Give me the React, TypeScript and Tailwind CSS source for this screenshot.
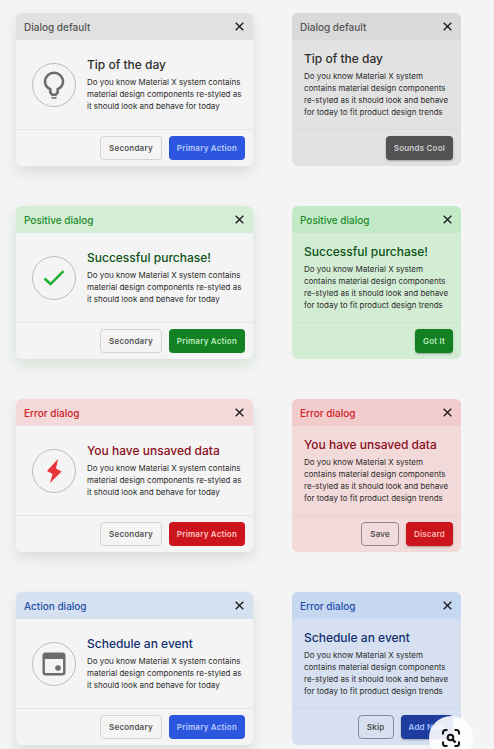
import React from "react";

type Tone = "neutral" | "positive" | "error" | "action";

interface Theme {
  head: string;
  title: string;
  compactCard: string;
  compactHead: string;
  line: string;
  primary: string;
  compactPrimary: string;
  outline: string;
  shadow: string;
}

const themes: Record<Tone, Theme> = {
  neutral: {
    head: "bg-[#e1e1e1] text-[#555555]",
    title: "text-[#2e2e2e]",
    compactCard: "bg-[#e2e2e2]",
    compactHead: "bg-[#d9d9d9] text-[#555555]",
    line: "border-[#d9d9d9]",
    primary: "bg-[#2c56dd] text-[#b9ccff]",
    compactPrimary: "bg-[#525252] text-[#cfcfcf]",
    outline: "border-[#8c8c8c]",
    shadow: "shadow-[0_6px_14px_rgba(0,0,0,0.10)]",
  },
  positive: {
    head: "bg-[#d3eed5] text-[#1f8a2c]",
    title: "text-[#0d5216]",
    compactCard: "bg-[#d3edd5]",
    compactHead: "bg-[#c3eac7] text-[#1f8a2c]",
    line: "border-[#c6e6c9]",
    primary: "bg-[#128023] text-[#b8ecbd]",
    compactPrimary: "bg-[#128023] text-[#b8ecbd]",
    outline: "border-[#8c8c8c]",
    shadow: "shadow-[0_6px_14px_rgba(20,110,40,0.14)]",
  },
  error: {
    head: "bg-[#f3d9d9] text-[#cf2027]",
    title: "text-[#8a0f1a]",
    compactCard: "bg-[#f3dada]",
    compactHead: "bg-[#f2cccd] text-[#cf2027]",
    line: "border-[#f0cdce]",
    primary: "bg-[#cb141b] text-[#ffc4c4]",
    compactPrimary: "bg-[#cb141b] text-[#ffb9b9]",
    outline: "border-[#958888]",
    shadow: "shadow-[0_6px_14px_rgba(0,0,0,0.10)]",
  },
  action: {
    head: "bg-[#d5e0f0] text-[#2450ab]",
    title: "text-[#12306f]",
    compactCard: "bg-[#d6e0f0]",
    compactHead: "bg-[#c6d7f0] text-[#2450ab]",
    line: "border-[#c9d7ec]",
    primary: "bg-[#2c56dd] text-[#b9ccff]",
    compactPrimary: "bg-[#1f3d9f] text-[#a9c2ff]",
    outline: "border-[#858b96]",
    shadow: "shadow-[0_6px_14px_rgba(0,0,0,0.10)]",
  },
};

function Header({ label, className }: { label: string; className: string }) {
  return (
    <header className={`flex h-[27px] items-center justify-between pl-2 pr-[9px] ${className}`}>
      <h2 className="text-[10px] font-medium leading-4">{label}</h2>
      <button type="button" aria-label="Close" className="text-[#161616]">
        <svg className="block size-[9px]" viewBox="0 0 9 9" fill="none" stroke="currentColor" strokeWidth="1.3">
          <path d="M.7.7l7.600 7.600M8.300.7L.7 8.300" />
        </svg>
      </button>
    </header>
  );
}

function Action({ label, className }: { label: string; className: string }) {
  return (
    <button
      type="button"
      className={`h-6 whitespace-nowrap rounded px-2 text-[8px] font-semibold leading-3 tracking-wide ${className}`}
    >
      {label}
    </button>
  );
}

function Copy({ title, lines, tone }: { title: string; lines: string[]; tone: Tone }) {
  return (
    <div className="whitespace-nowrap">
      <h3 className={`text-[12px] font-medium leading-4 ${themes[tone].title}`}>{title}</h3>
      <p className="mt-[3px] text-[8px] leading-3 text-[#2b2b2b]">
        {lines.map((line) => (
          <span key={line} className="block">
            {line}
          </span>
        ))}
      </p>
    </div>
  );
}

const wideLines = [
  "Do you know Material X system contains",
  "material design components re-styled as",
  "it should look and behave for today",
];
const compactLines = [
  "Do you know Material X system",
  "contains material design components",
  "re-styled as it should look and behave",
  "for today to fit product design trends",
];

function WideDialog({ label, title, tone, icon }: { label: string; title: string; tone: Tone; icon: React.ReactNode }) {
  const t = themes[tone];
  return (
    <section className={`overflow-hidden rounded-md bg-[#f4f4f4] ${t.shadow}`}>
      <Header label={label} className={t.head} />
      <div className="flex h-[89px] items-center gap-[11px] px-4">
        <div className="flex size-11 shrink-0 items-center justify-center rounded-full border border-[#bbbbbb]">
          {icon}
        </div>
        <Copy title={title} lines={wideLines} tone={tone} />
      </div>
      <footer className="flex justify-end gap-[7px] border-t border-[#e4e4e4] px-2 py-[6px]">
        <Action label="Secondary" className="border border-[#d2d2d2] text-[#555555]" />
        <Action label="Primary Action" className={t.primary} />
      </footer>
    </section>
  );
}

function CompactDialog({
  label,
  title,
  tone,
  secondary,
  primary,
}: {
  label: string;
  title: string;
  tone: Tone;
  secondary?: string;
  primary: string;
}) {
  const t = themes[tone];
  return (
    <section className={`overflow-hidden rounded-md ${t.compactCard}`}>
      <Header label={label} className={t.compactHead} />
      <div className="flex h-[89px] items-center px-3">
        <Copy title={title} lines={compactLines} tone={tone} />
      </div>
      <footer className={`flex justify-end gap-[7px] border-t px-2 py-[6px] ${t.line}`}>
        {secondary && <Action label={secondary} className={`border text-[#505050] ${t.outline}`} />}
        <Action label={primary} className={`shadow-[0_1px_2px_rgba(0,0,0,0.3)] ${t.compactPrimary}`} />
      </footer>
    </section>
  );
}

const Bulb = () => (
  <svg className="h-7 w-[22px]" viewBox="0 0 22 28" fill="none" stroke="#6c6c6c" strokeWidth="2.600">
    <path d="M7.300 18.200C4 16.600 2 14 2 10.800a9 9 0 0 1 18 0c0 3.200-2 5.800-5.300 7.400v3.300l-2 2.200H9.300l-2-2.200z" />
    <path d="M8.500 26.300q2.500 1.600 5 0" strokeWidth="1.500" />
  </svg>
);
const Check = () => (
  <svg className="h-4 w-[22px]" viewBox="0 0 22 16" fill="none" stroke="#1daf2e" strokeWidth="2.400">
    <path d="M1.500 8.500l6 5.500L20.500 1.200" />
  </svg>
);
const Bolt = () => (
  <svg className="h-6 w-4" viewBox="0 0 16 24" fill="#ea333a">
    <path d="M12 0L1 12l5.500 3L4 24l11.500-11.500-5.500-3z" />
  </svg>
);
const Calendar = () => (
  <svg className="size-6" viewBox="0 0 24 24" fill="none" stroke="#6c6c6c" strokeWidth="2.400">
    <rect x="1.700" y="1.700" width="20.600" height="20.600" rx="2" />
    <path d="M1.500 4.500h21" strokeWidth="5" />
    <circle cx="16" cy="16" r="2.800" fill="#6c6c6c" stroke="none" />
  </svg>
);

export default function App() {
  return (
    <main className="relative min-h-screen bg-[#f4f4f4] pb-1 pl-4 pr-[33px] pt-[13px] font-['Inter','Liberation_Sans',sans-serif]">
      <div className="grid grid-cols-[237fr_169fr] gap-x-[39px] gap-y-10">
        <WideDialog label="Dialog default" title="Tip of the day" tone="neutral" icon={<Bulb />} />
        <CompactDialog label="Dialog default" title="Tip of the day" tone="neutral" primary="Sounds Cool" />
        <WideDialog label="Positive dialog" title="Successful purchase!" tone="positive" icon={<Check />} />
        <CompactDialog label="Positive dialog" title="Successful purchase!" tone="positive" primary="Got It" />
        <WideDialog label="Error dialog" title="You have unsaved data" tone="error" icon={<Bolt />} />
        <CompactDialog label="Error dialog" title="You have unsaved data" tone="error" secondary="Save" primary="Discard" />
        <WideDialog label="Action dialog" title="Schedule an event" tone="action" icon={<Calendar />} />
        <CompactDialog label="Error dialog" title="Schedule an event" tone="action" secondary="Skip" primary="Add New" />
      </div>
      <button
        type="button"
        aria-label="Visual search"
        className="fixed -bottom-[11px] right-[21px] flex size-11 items-center justify-center rounded-full bg-white/90 text-[#111111]"
      >
        <svg className="size-5" viewBox="0 0 20 20" fill="none" stroke="currentColor" strokeWidth="2">
          <path d="M2 6.500V4.500A2.500 2.500 0 0 1 4.500 2h2M13.500 2h2A2.500 2.500 0 0 1 18 4.500v2M18 13.500v2a2.500 2.500 0 0 1-2.500 2.500h-2M6.500 18h-2A2.500 2.500 0 0 1 2 15.500v-2" />
          <circle cx="9.500" cy="9.500" r="2.800" />
          <path d="M11.500 11.500l3 3" strokeWidth="2.400" />
        </svg>
      </button>
    </main>
  );
}
